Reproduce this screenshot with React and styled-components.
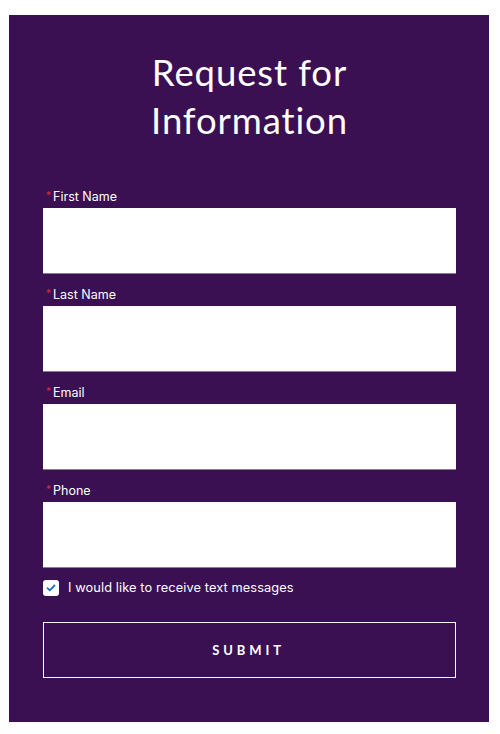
import React from "react";
import styled, { createGlobalStyle } from "styled-components";

const Global = createGlobalStyle`
  html, body { margin: 0; padding: 0; background: #ffffff; }
  body { font-family: Inter, "Noto Sans", sans-serif; }
  * { box-sizing: border-box; }
`;

const Page = styled.div`
  padding: 15px 11px 12px 9px;
`;

const Panel = styled.form`
  background: #3a1052;
  width: 480px;
  height: 707px;
  padding: 33px 33px 0 34px;
  display: flex;
  flex-direction: column;
`;

const Title = styled.h1`
  margin: 0 0 45px;
  font-family: Lato, sans-serif;
  font-weight: 400;
  font-size: 36.5px;
  line-height: 48px;
  letter-spacing: 0.9px;
  color: #ffffff;
  text-align: center;
`;

const Fields = styled.div`
  display: flex;
  flex-direction: column;
  gap: 13px;
`;

const Field = styled.div`
  display: flex;
  flex-direction: column;
  gap: 3px;
`;

const Label = styled.label`
  display: flex;
  align-items: flex-start;
  gap: 2px;
  padding-left: 3px;
  font-size: 12.5px;
  line-height: 16px;
  color: #ffffff;
`;

const Req = styled.span`
  color: #e0283c;
  font-size: 10px;
  line-height: 12px;
`;

const Input = styled.input`
  display: block;
  width: 100%;
  height: 66px;
  border: none;
  border-bottom: 1px solid #8c7aa0;
  background: #ffffff;
  margin: 0;
`;

const CheckRow = styled.label`
  display: flex;
  align-items: center;
  gap: 9px;
  margin-top: 12px;
  font-size: 12.8px;
  line-height: 16px;
  color: #ffffff;
  letter-spacing: 0.1px;
`;

const Box = styled.span`
  width: 16px;
  height: 16px;
  border-radius: 3px;
  background: #ffffff;
  display: flex;
  align-items: center;
  justify-content: center;
`;

const Submit = styled.button`
  margin-top: 26px;
  height: 56px;
  width: 100%;
  background: transparent;
  border: 1px solid #ffffff;
  color: #ffffff;
  font-family: Lato, sans-serif;
  font-weight: 700;
  font-size: 13px;
  letter-spacing: 3.9px;
  padding-left: 4px;
`;

const fields = ["First Name", "Last Name", "Email", "Phone"];

export default function App() {
  return (
    <Page>
      <Global />
      <Panel onSubmit={(e) => e.preventDefault()}>
        <Title>
          Request for
          <br />
          Information
        </Title>
        <Fields>
          {fields.map((f) => (
            <Field key={f}>
              <Label>
                <Req>*</Req>
                {f}
              </Label>
              <Input type="text" aria-label={f} />
            </Field>
          ))}
        </Fields>
        <CheckRow>
          <Box>
            <svg width="10" height="8" viewBox="0 0 10 8">
              <path d="M1.5 4.2 L3.8 6.3 L8.5 1.5" fill="none" stroke="#1a6fd6" strokeWidth="1.8" strokeLinecap="round" strokeLinejoin="round" />
            </svg>
          </Box>
          I would like to receive text messages
        </CheckRow>
        <Submit type="submit">SUBMIT</Submit>
      </Panel>
    </Page>
  );
}
